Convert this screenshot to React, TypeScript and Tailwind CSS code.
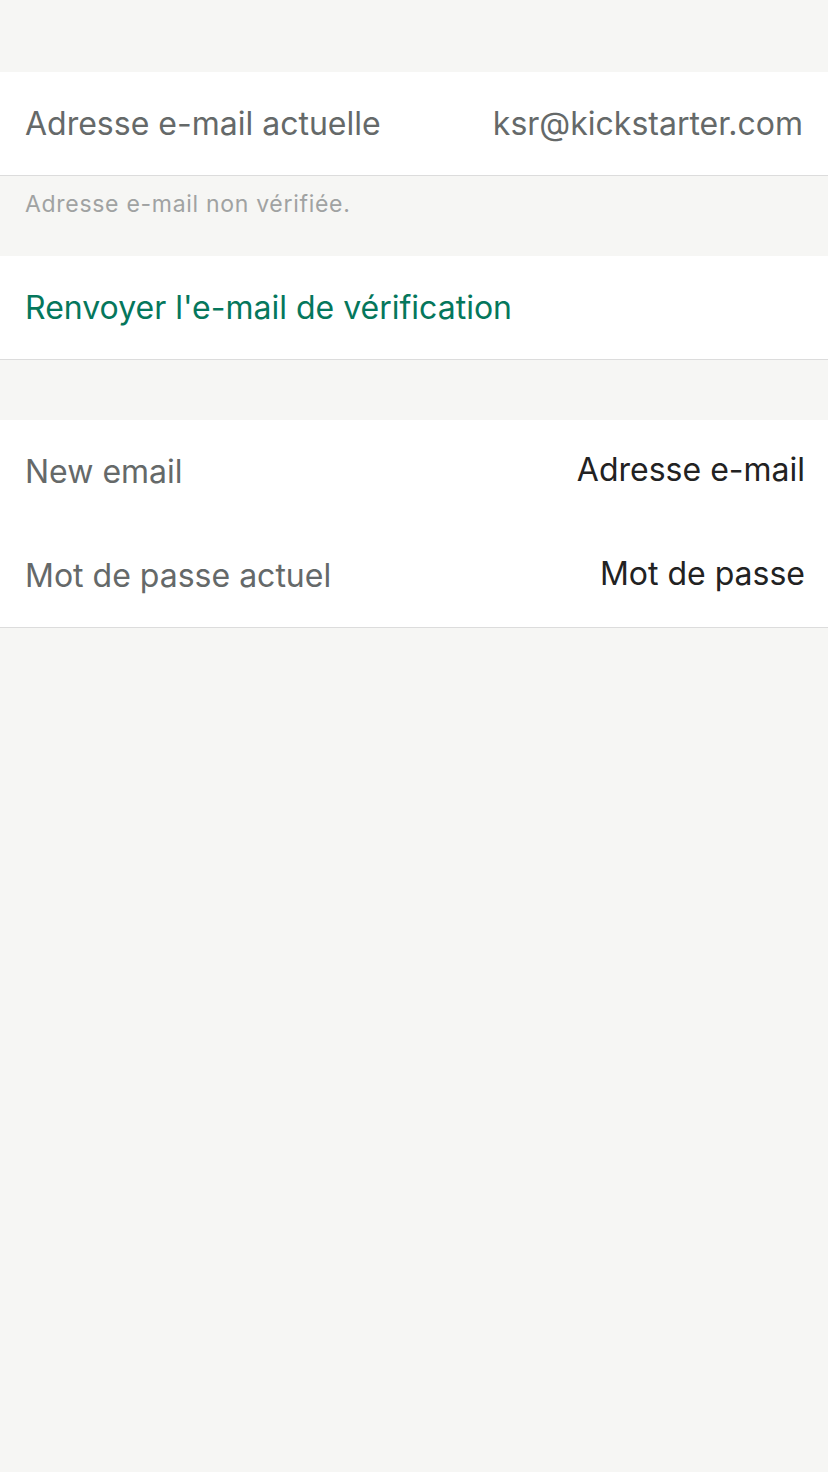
export default function App() {
  const font = { fontFamily: "Inter, 'Noto Sans', sans-serif" };
  return (
    <div className="min-h-[1472px] w-full bg-[#f6f6f4]" style={font}>
      <div className="h-[72px]" />
      <div className="flex h-[104px] items-center justify-between border-b border-[#dcdcdc] bg-white pl-[25px] pr-[25px]">
        <span className="text-[32px] text-[#656969]">Adresse e-mail actuelle</span>
        <span className="text-[32px] text-[#656969]">ksr@kickstarter.com</span>
      </div>
      <div className="h-[80px] pl-[25px] pt-[11px]">
        <span className="text-[23px] tracking-[0.7px] text-[#a0a2a2]">Adresse e-mail non vérifiée.</span>
      </div>
      <div className="flex h-[104px] items-center border-b border-[#dcdcdc] bg-white pl-[25px]">
        <span className="text-[32px] text-[#05775c]">Renvoyer l'e-mail de vérification</span>
      </div>
      <div className="h-[60px]" />
      <div className="border-b border-[#dcdcdc] bg-white">
        <div className="flex h-[104px] items-center justify-between pl-[25px] pr-[23px]">
          <span className="text-[32px] text-[#656969]">New email</span>
          <span className="-mt-[4px] text-[32px] text-[#222222]">Adresse e-mail</span>
        </div>
        <div className="flex h-[103px] items-center justify-between pl-[25px] pr-[23px]">
          <span className="text-[32px] text-[#656969]">Mot de passe actuel</span>
          <span className="-mt-[4px] text-[32px] text-[#222222]">Mot de passe</span>
        </div>
      </div>
    </div>
  );
}
